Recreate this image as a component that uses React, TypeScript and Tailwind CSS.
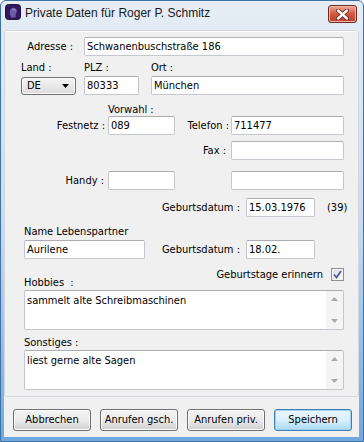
import React from 'react';

const ui = "font-['DejaVu_Sans_Condensed','DejaVu_Sans',sans-serif] text-[11px] text-black";

function Field({ className, value }: { className: string; value?: string }) {
  return (
    <div
      className={`h-[19px] bg-white border border-[#c4c8ce] border-t-[#abadb3] rounded-[2px] px-[2px] flex items-center leading-none whitespace-nowrap ${className}`}
    >
      {value}
    </div>
  );
}

function Label({ className, children }: { className: string; children: React.ReactNode }) {
  return <div className={`leading-[13px] whitespace-nowrap ${className}`}>{children}</div>;
}

function Memo({ value }: { value: string }) {
  return (
    <div className="ml-[19px] w-[320px] h-[40px] bg-white border border-[#c4c8ce] border-t-[#abadb3] rounded-[2px] flex">
      <div className="flex-1 pl-[2px] pt-[3px] leading-[13px]">{value}</div>
      <div className="w-[17px] bg-[#f4f4f4] flex flex-col items-center justify-between py-[6px]">
        <svg width="7" height="4" viewBox="0 0 7 4">
          <path d="M0 4 L3.5 0 L7 4 Z" fill="#a9a9a9" />
        </svg>
        <svg width="7" height="4" viewBox="0 0 7 4">
          <path d="M0 0 L7 0 L3.5 4 Z" fill="#a9a9a9" />
        </svg>
      </div>
    </div>
  );
}

function Button({ children, primary }: { children: React.ReactNode; primary?: boolean }) {
  return (
    <div
      className={
        primary
          ? 'w-[78px] h-[22px] rounded-[3px] border border-[#3c7fb1] bg-gradient-to-b from-[#eaf6fd] via-[#d9f0fc] to-[#a7d9f5] shadow-[inset_0_0_0_1px_#9fd3f3] flex items-center justify-center'
          : 'w-[78px] h-[22px] rounded-[3px] border border-[#707070] bg-gradient-to-b from-[#f2f2f2] via-[#ebebeb] to-[#cfcfcf] shadow-[inset_0_0_0_1px_#fcfcfc] flex items-center justify-center'
      }
    >
      {children}
    </div>
  );
}

export default function App() {
  return (
    <div className={`w-[364px] h-[442px] ${ui}`}>
      <div className="w-full h-full border border-[#3f73a8] rounded-t-[6px] bg-gradient-to-b from-[#e6edf5] via-[#c9dcef] to-[#6ea8df] flex flex-col">
        {/* title bar */}
        <div className="h-[29px] flex items-start pl-[4px] pr-[6px]">
          <svg className="mt-[3px]" width="16" height="16" viewBox="0 0 16 16">
            <rect x="0.5" y="0.5" width="15" height="15" rx="3" fill="#33195c" stroke="#221040" />
            <path d="M6 13.5 C6 11.5 4.5 10.5 4.7 8 C4.9 5 6.8 3.5 9 3.7 C11.2 4 12.2 5.8 11.8 7.8 C11.5 9.2 10.6 9.8 10.6 11.2 L10.6 13.5 Z" fill="#6d5ba8" />
            <path d="M7 6 C8 5 9.8 5.2 10.5 6.5" stroke="#a99ddb" strokeWidth="1" fill="none" />
          </svg>
          <div className="ml-[4px] mt-[4px] text-[12px] leading-[16px] font-['Liberation_Sans',sans-serif] text-[#1a1a1a]">
            Private Daten für Roger P. Schmitz
          </div>
          <div className="ml-auto mt-[4px] w-[29px] h-[18px] rounded-[3px] border border-[#6d2a20] bg-gradient-to-b from-[#e9a897] via-[#d2573f] to-[#c13f2b] shadow-[inset_0_0_0_1px_#f0b6a6] flex items-center justify-center">
            <svg width="13" height="11" viewBox="0 0 13 11">
              <path d="M2 1.5 L11 9.5 M11 1.5 L2 9.5" stroke="#5a2018" strokeWidth="4" strokeLinecap="round" />
              <path d="M2 1.5 L11 9.5 M11 1.5 L2 9.5" stroke="#ffffff" strokeWidth="2.4" strokeLinecap="round" />
            </svg>
          </div>
        </div>

        {/* client area */}
        <div className="ml-[3px] mr-[4px] h-[407px] bg-[#f0f0f0] flex flex-col">
          <div className="h-[367px] border border-[#d3d8de] rounded-[3px] shadow-[inset_0_1px_0_#ffffff] flex flex-col">
            {/* Adresse */}
            <div className="mt-[6px] flex items-center">
              <Label className="w-[68px] text-right">Adresse :</Label>
              <Field className="ml-[11px] w-[260px]" value="Schwanenbuschstraße 186" />
            </div>

            {/* Land / PLZ / Ort labels */}
            <div className="mt-[5px] flex pl-[16px]">
              <Label className="w-[63px]">Land :</Label>
              <Label className="w-[67px]">PLZ :</Label>
              <Label className="">Ort :</Label>
            </div>
            <div className="mt-[2px] flex items-center pl-[16px]">
              <div className="w-[55px] h-[18px] rounded-[3px] border border-[#707070] bg-gradient-to-b from-[#f4f4f4] to-[#dcdcdc] shadow-[inset_0_0_0_1px_#fafafa] flex items-center pl-[5px] pr-[6px]">
                <span className="leading-none">DE</span>
                <svg className="ml-auto" width="7" height="4" viewBox="0 0 7 4">
                  <path d="M0 0 L7 0 L3.5 4 Z" fill="#000" />
                </svg>
              </div>
              <Field className="ml-[8px] w-[55px] h-[18px]" value="80333" />
              <Field className="ml-[12px] w-[193px] h-[18px]" value="München" />
            </div>

            {/* Vorwahl */}
            <div className="mt-[8px] pl-[103px]">
              <Label className="leading-[12px]">Vorwahl :</Label>
            </div>
            <div className="flex items-center">
              <Label className="w-[100px] text-right">Festnetz :</Label>
              <Field className="ml-[3px] w-[67px]" value="089" />
              <Label className="w-[54px] text-right">Telefon :</Label>
              <Field className="ml-[2px] w-[113px]" value="711477" />
            </div>

            {/* Fax */}
            <div className="mt-[6px] flex items-center">
              <Label className="w-[221px] text-right">Fax :</Label>
              <Field className="ml-[5px] w-[113px]" />
            </div>

            {/* Handy */}
            <div className="mt-[11px] flex items-center">
              <Label className="w-[99px] text-right">Handy :</Label>
              <Field className="ml-[4px] w-[67px]" />
              <Field className="ml-[56px] w-[113px]" />
            </div>

            {/* Geburtsdatum */}
            <div className="mt-[8px] flex items-center">
              <Label className="w-[235px] text-right">Geburtsdatum :</Label>
              <Field className="ml-[6px] w-[69px]" value="15.03.1976" />
              <Label className="ml-[12px]">(39)</Label>
            </div>

            {/* Lebenspartner */}
            <div className="mt-[8px] pl-[19px]">
              <Label className="">Name Lebenspartner</Label>
            </div>
            <div className="mt-[2px] flex items-center pl-[19px]">
              <Field className="w-[121px]" value="Aurilene" />
              <Label className="w-[95px] text-right">Geburtsdatum :</Label>
              <Field className="ml-[6px] w-[69px]" value="18.02." />
            </div>

            {/* Hobbies / Geburtstage erinnern */}
            <div className="mt-[3px] h-[28px] flex items-start justify-between pl-[19px] pr-[14px]">
              <Label className="mt-[14px]">Hobbies&nbsp; :</Label>
              <div className="mt-[6px] flex items-center h-[13px]">
                <span className="leading-[13px]">Geburtstage erinnern</span>
                <div className="ml-[8px] w-[13px] h-[13px] border border-[#8e8f8f] bg-gradient-to-br from-[#dcdcdc] to-[#fbfbfb] shadow-[inset_0_0_0_1px_#f4f4f4] flex items-center justify-center">
                  <svg width="9" height="9" viewBox="0 0 9 9">
                    <path d="M1 4.5 L3.5 7.5 L8 1" stroke="#4a5f97" strokeWidth="1.8" fill="none" />
                  </svg>
                </div>
              </div>
            </div>
            <Memo value="sammelt alte Schreibmaschinen" />

            {/* Sonstiges */}
            <div className="mt-[6px] pl-[19px]">
              <Label className="">Sonstiges :</Label>
            </div>
            <div className="mt-[1px]">
              <Memo value="liest gerne alte Sagen" />
            </div>
          </div>

          {/* buttons */}
          <div className="pt-[12px] pl-[9px] flex gap-[9px]">
            <Button>Abbrechen</Button>
            <Button>Anrufen gsch.</Button>
            <Button>Anrufen priv.</Button>
            <Button primary>Speichern</Button>
          </div>
        </div>
      </div>
    </div>
  );
}
